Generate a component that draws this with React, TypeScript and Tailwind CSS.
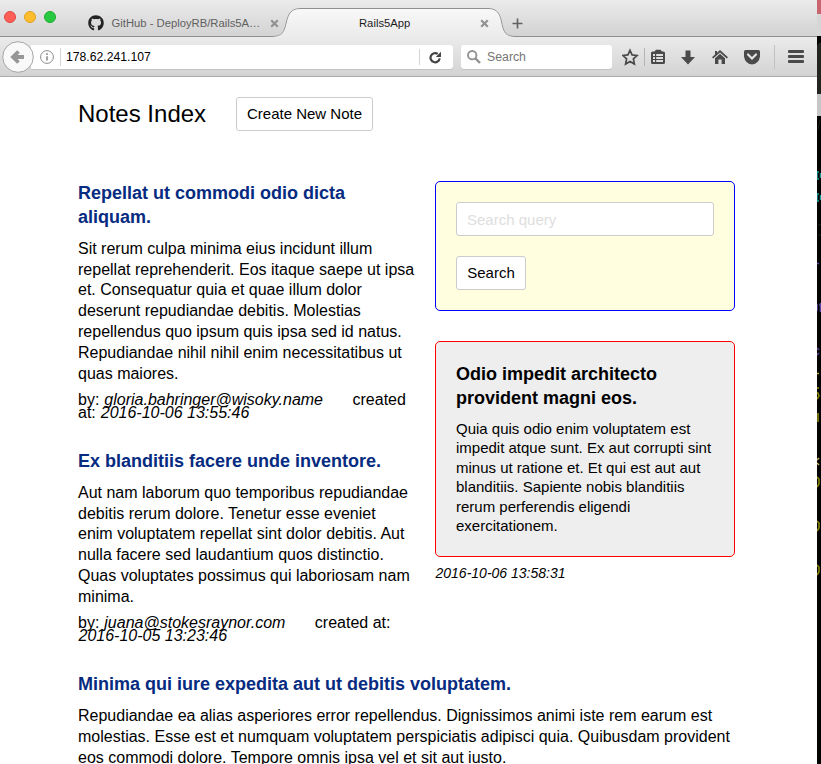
import { ReactNode } from "react";
import { FaGithub } from "react-icons/fa";

function Lines({ items }: { items: string[] }) {
  return (
    <>
      {items.map((t) => (
        <span key={t} className="block whitespace-nowrap">
          {t}
        </span>
      ))}
    </>
  );
}

function CloseIcon() {
  return (
    <svg width="9" height="9" viewBox="0 0 9 9" className="shrink-0">
      <path d="M1.2 1.2 7.8 7.8M7.8 1.2 1.2 7.8" stroke="#929292" strokeWidth="2.200" />
    </svg>
  );
}

function TabStrip() {
  return (
    <div className="relative h-[37px] bg-gradient-to-b from-[#ebebeb] to-[#d2d2d2]">
      <svg className="absolute inset-0" width="817" height="37" viewBox="0 0 817 37">
        <defs>
          <linearGradient id="tab" x1="0" y1="0" x2="0" y2="1">
            <stop offset="0" stopColor="#f8f8f8" />
            <stop offset="1" stopColor="#ebebeb" />
          </linearGradient>
        </defs>
        <path
          d="M0 36.5H272C282 36.5 284 33 286.500 22C289 11 293 8.500 302 8.500H487C496 8.500 499.500 12 501.500 22C503.500 33 506 36.500 516 36.500H817V38H0Z"
          fill="none"
          stroke="#8f8f8f"
        />
        <path
          d="M272 37C282 36.5 284.500 33 287 22C289.500 11.500 293 9 302 9H487C496 9 499 12 501 22C503 33 506 37 516 37Z"
          fill="url(#tab)"
        />
      </svg>
      <div className="relative flex h-[37px]">
        <div className="flex h-[34px] w-[88px] gap-[8px] pl-1">
          <span className="mt-[11px] h-3 w-3 rounded-full border border-[#e14942] bg-[#ff5f57]" />
          <span className="mt-[11px] h-3 w-3 rounded-full border border-[#dfa023] bg-[#ffbd2e]" />
          <span className="mt-[11px] h-3 w-3 rounded-full border border-[#1dad2b] bg-[#28c940]" />
        </div>
        <div className="flex h-[46px] w-[200px] items-center">
          <FaGithub size={16} color="#222" className="shrink-0" />
          <span className="ml-[7.500px] w-[158px] whitespace-nowrap pt-px text-[11.250px] text-[#606060]">
            GitHub - DeployRB/Rails5A…
          </span>
          <CloseIcon />
        </div>
        <div className="flex h-[46px] w-[214px] items-center pl-[71px]">
          <span className="w-[120.500px] whitespace-nowrap pt-px text-[11.250px] text-[#1c1c1c]">Rails5App</span>
          <CloseIcon />
        </div>
        <svg width="11" height="11" viewBox="0 0 11 11" className="ml-[9.500px] mt-[18px]">
          <path d="M5.500 0.500V10.500M0.500 5.500H10.500" stroke="#606060" strokeWidth="1.600" />
        </svg>
      </div>
    </div>
  );
}

function NavBar() {
  return (
    <div className="flex h-[40px] items-start border-b border-[#acacac] bg-gradient-to-b from-[#ebebeb] to-[#d3d3d3] pt-2">
      <div className="relative flex h-6 w-[439px] shrink-0 items-center">
        <svg className="absolute -top-1 left-[2px]" width="32" height="32" viewBox="0 0 32 32">
          <circle cx="16" cy="16" r="15.300" fill="#f9f9f9" stroke="#a5a5a5" />
          <path d="M22 16H11M16.500 10.500 11 16l5.500 5.500" fill="none" stroke="#979797" strokeWidth="3.800" />
        </svg>
        <div className="ml-[31px] flex h-6 w-[422px] shrink-0 items-center rounded-r-[3px] bg-white pl-[9px] shadow-[0_1px_0_#c2c2c2]">
          <svg width="14" height="14" viewBox="0 0 14 14">
            <circle cx="7" cy="7" r="6.400" fill="none" stroke="#8c8c8c" />
            <path d="M7 6.200V10.500M7 3.300V5" stroke="#8c8c8c" strokeWidth="1.600" />
          </svg>
          <span className="ml-[6px] h-[18px] w-px bg-[#d5d5d5]" />
          <span className="ml-[5px] w-[353px] pt-px text-[12.200px] text-black">178.62.241.107</span>
          <span className="h-4 w-px bg-[#d5d5d5]" />
          <svg className="ml-[9px]" width="13" height="13" viewBox="0 0 13 13">
            <path d="M10.700 7.300A4.600 4.600 0 1 1 8.800 2.900" fill="none" stroke="#444" strokeWidth="2.200" />
            <path d="M12 0.800V6H6.800Z" fill="#444" />
          </svg>
        </div>
      </div>
      <div className="ml-[22px] flex h-6 w-[151px] shrink-0 items-center rounded-[3px] bg-white pl-[6px] shadow-[0_1px_0_#c2c2c2]">
        <svg width="14" height="14" viewBox="0 0 14 14">
          <circle cx="5.200" cy="5.200" r="4.200" fill="none" stroke="#929292" strokeWidth="1.900" />
          <path d="M8.400 8.400 13 13" stroke="#929292" strokeWidth="2.400" />
        </svg>
        <span className="ml-[6px] pt-px text-[12.300px] text-[#757575]">Search</span>
      </div>
      <svg className="ml-[10px] shrink-0" width="195" height="24" viewBox="0 0 195 24">
        <g fill="#4a4a4a">
          <path
            d="M8 5.300 10.100 9.900 15 10.500 11.400 13.900 12.400 19 8 16.400 3.600 19 4.600 13.900 1 10.500 5.900 9.900Z"
            fill="none"
            stroke="#4a4a4a"
            strokeWidth="1.700"
          />
          <path d="M22 3H23V21H22Z" fill="#b5b5b5" />
          <path
            fillRule="evenodd"
            d="M31 6.500H32.500L34 4.800H38.500L40 6.500H41.500Q43 6.500 43 8V17.500Q43 19 41.500 19H30.500Q29 19 29 17.500V8Q29 6.500 30.500 6.500ZM31 9V11H33V9ZM34.200 9V11H41V9ZM31 12V14H33V12ZM34.200 12V14H41V12ZM31 15V17H33V15ZM34.200 15V17H41V15Z"
          />
          <path d="M63.500 5.500H68.500V12H73L66 19.500 59 12H63.500Z" />
          <path d="M98 5 106 12.300 104.800 13.500 98 7.500 91.200 13.500 90 12.300 93 9.600V6H95V7.700Z" />
          <path d="M98 8.800 103 13.200V19H99.600V14.500H96.400V19H93V13.200Z" />
          <path d="M123.500 5H136.500Q138 5 138 6.500V11.500Q137 18.500 130 19.500Q123 18.500 122 11.500V6.500Q122 5 123.500 5Z" />
          <path d="M126 9.500 130 13.500 134 9.500" fill="none" stroke="#e5e5e5" strokeWidth="2.200" strokeLinecap="round" />
          <path d="M152 0H153V24H152Z" fill="#c1c1c1" />
          <rect x="166" y="5" width="16" height="3" rx="1" />
          <rect x="166" y="10" width="16" height="3" rx="1" />
          <rect x="166" y="15" width="16" height="3" rx="1" />
        </g>
      </svg>
    </div>
  );
}

function Heading({ children, dark }: { children: ReactNode; dark?: boolean }) {
  return (
    <h2
      className={
        dark
          ? "text-[18px] font-bold leading-[24px] text-black"
          : "text-[18px] font-bold leading-[24px] text-[#062b80]"
      }
    >
      {children}
    </h2>
  );
}

function Note({ title, body, meta }: { title: string[]; body: string[]; meta?: ReactNode }) {
  return (
    <article className="mb-[30px]">
      <Heading>
        <Lines items={title} />
      </Heading>
      <p className="mt-[9.800px] text-[16px] leading-[20.800px]">
        <Lines items={body} />
      </p>
      {meta && <div className="mt-[8.600px] whitespace-nowrap text-[16px] leading-[13px]">{meta}</div>}
    </article>
  );
}

function Terminal() {
  return (
    <svg className="shrink-0" width="4" height="764" viewBox="0 0 4 764">
      <rect width="4" height="764" fill="#020200" />
      <rect width="4" height="14" fill="#c9656f" />
      <rect y="14" width="4" height="22" fill="#d6d6d6" />
      <path d="M0 46Q1 43 4 42V94H0Z" fill="#25251f" />
      <rect y="94" width="4" height="22" fill="#c6c6c6" />
      <g fill="none" strokeWidth="1.500">
        <path d="M2 172H0V179H2M2 194H0V201H2M3.500 173V178M3.500 195V200" stroke="#139b9b" />
        <path d="M0 263.500H2M0 304V311M2 305H4M3.500 303V312M0 348L2 350M0 355L2 353" stroke="#5944a5" />
        <path d="M0 373.500H2" stroke="#b7a83a" />
        <path d="M0 388H2M0 393H1L2 396 0 399M1 413V422M0 477L2 479V484L0 487M0 521L2 523V528L0 531M0 565L2 567V572L0 575" stroke="#8f8d08" />
        <path d="M0 460L2 458M0 463L2 465" stroke="#c3b46a" />
      </g>
      <path d="M3 120 1 130M1 225H4M1 235H4" stroke="#1d1d1a" />
    </svg>
  );
}

export default function App() {
  return (
    <div className="flex h-[764px] w-[821px] overflow-hidden bg-white font-['Liberation_Sans',Arial,sans-serif] text-black">
      <div className="w-[817px] shrink-0">
        <TabStrip />
        <NavBar />
        <main className="pl-[78px] pt-[20px]">
          <header className="flex h-[34px] items-center">
            <h1 className="w-[158px] whitespace-nowrap text-[24px] leading-[34px]">Notes Index</h1>
            <button className="h-[34px] w-[137px] whitespace-nowrap rounded-[3px] border border-[#ccc] bg-white text-[15px]">
              Create New Note
            </button>
          </header>
          <div className="mt-[50px] flex">
            <section className="w-[357px] shrink-0">
              <Note
                title={["Repellat ut commodi odio dicta", "aliquam."]}
                body={[
                  "Sit rerum culpa minima eius incidunt illum",
                  "repellat reprehenderit. Eos itaque saepe ut ipsa",
                  "et. Consequatur quia et quae illum dolor",
                  "deserunt repudiandae debitis. Molestias",
                  "repellendus quo ipsum quis ipsa sed id natus.",
                  "Repudiandae nihil nihil enim necessitatibus ut",
                  "quas maiores.",
                ]}
                meta={
                  <>
                    by: <em className="mr-[29.500px] pl-[0.500px]">gloria.bahringer@wisoky.name</em>created
                    <br />
                    at: <em className="pl-[0.500px]">2016-10-06 13:55:46</em>
                  </>
                }
              />
              <Note
                title={["Ex blanditiis facere unde inventore."]}
                body={[
                  "Aut nam laborum quo temporibus repudiandae",
                  "debitis rerum dolore. Tenetur esse eveniet",
                  "enim voluptatem repellat sint dolor debitis. Aut",
                  "nulla facere sed laudantium quos distinctio.",
                  "Quas voluptates possimus qui laboriosam nam",
                  "minima.",
                ]}
                meta={
                  <>
                    by: <em className="mr-[29.500px] pl-[0.500px]">juana@stokesraynor.com</em>created at:
                    <br />
                    <em className="pl-[0.500px]">2016-10-05 13:23:46</em>
                  </>
                }
              />
            </section>
            <aside className="w-[300px] shrink-0">
              <form className="h-[130px] rounded-[5px] border border-[#0000ff] bg-[#ffffdf] p-5">
                <input
                  placeholder="Search query"
                  className="block h-[34px] w-[258px] rounded-[3px] border border-[#ccc] bg-white px-[10px] text-[15px] placeholder:text-[#dedede]"
                />
                <button type="button" className="mt-5 block h-[34px] w-[70px] rounded-[3px] border border-[#ccc] bg-white pt-px text-[15px]">
                  Search
                </button>
              </form>
              <div className="mt-[30px] h-[216px] rounded-[5px] border border-[#ff0000] bg-[#eee] p-5">
                <Heading dark>
                  <Lines items={["Odio impedit architecto", "provident magni eos."]} />
                </Heading>
                <p className="mt-[8.700px] text-[15px] leading-[19.500px]">
                  <Lines
                    items={[
                      "Quia quis odio enim voluptatem est",
                      "impedit atque sunt. Ex aut corrupti sint",
                      "minus ut ratione et. Et qui est aut aut",
                      "blanditiis. Sapiente nobis blanditiis",
                      "rerum perferendis eligendi",
                      "exercitationem.",
                    ]}
                  />
                </p>
              </div>
              <em className="mt-[7px] block pl-[0.500px] text-[14px] leading-[18.200px]">2016-10-06 13:58:31</em>
            </aside>
          </div>
          <Note
            title={["Minima qui iure expedita aut ut debitis voluptatem."]}
            body={[
              "Repudiandae ea alias asperiores error repellendus. Dignissimos animi iste rem earum est",
              "molestias. Esse est et numquam voluptatem perspiciatis adipisci quia. Quibusdam provident",
              "eos commodi dolore. Tempore omnis ipsa vel et sit aut iusto.",
            ]}
          />
        </main>
      </div>
      <Terminal />
    </div>
  );
}
